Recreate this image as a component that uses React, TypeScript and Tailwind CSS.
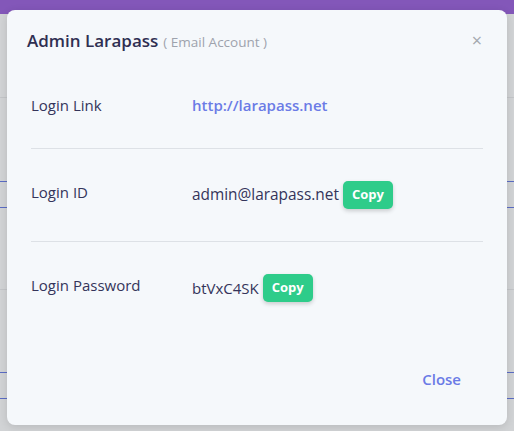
import React from "react";

function CopyBtn() {
  return (
    <button className="ml-[4px] h-[28px] px-[9px] rounded-[5px] bg-[#2ecc8a] text-white text-[13px] font-bold shadow-[0_2px_4px_rgba(0,0,0,0.18)]">
      Copy
    </button>
  );
}

export default function App() {
  return (
    <div
      className="relative w-[514px] h-[431px] overflow-hidden bg-[#d1d3d5]"
      style={{ fontFamily: '"Open Sans", "Noto Sans", sans-serif' }}
    >
      <div className="h-[14px] bg-[#8357b9]" />
      <div className="h-[83px]" />
      <div className="h-[84px] border-t border-[#c3c5c8]" />
      <div className="h-[26px] border-t border-[#5b6cc4]" />
      <div className="h-[82px] border-t border-[#5b6cc4]" />
      <div className="h-[83px] border-t border-[#c3c5c8]" />
      <div className="h-[26px] border-t border-[#5b6cc4]" />
      <div className="h-[40px] border-t border-[#5b6cc4]" />

      <div className="absolute left-[7px] top-[10px] w-[500px] h-[415px] rounded-[8px] bg-[#f5f8fb] shadow-[0_2px_8px_rgba(0,0,0,0.12)] flex flex-col">
        <div className="h-[60px] px-5 flex items-center justify-between">
          <div className="flex items-baseline gap-[5px] pt-[1px]">
            <span className="text-[17px] font-semibold text-[#2f2f52]">Admin Larapass</span>
            <span className="text-[13.5px] text-[#9ea3ad]">( Email Account )</span>
          </div>
          <span className="text-[18px] leading-none text-[#a4a8ae] mr-[5px]">×</span>
        </div>
        <div className="px-6 pt-6 text-[15px] text-[#34345a]">
          <div className="flex items-center h-[22px]">
            <div className="w-[161px]">Login Link</div>
            <a className="font-semibold text-[#6b7be6]">http://larapass.net</a>
          </div>
          <div className="mt-8 border-t border-[#dde1e6]" />
          <div className="flex items-center py-8">
            <div className="w-[161px] self-start">Login ID</div>
            <div className="flex items-center">
              <span className="text-[15.4px]">admin@larapass.net</span>
              <CopyBtn />
            </div>
          </div>
          <div className="border-t border-[#dde1e6]" />
          <div className="flex items-center py-8">
            <div className="w-[161px] self-start">Login Password</div>
            <div className="flex items-center">
              <span>btVxC4SK</span>
              <CopyBtn />
            </div>
          </div>
        </div>
        <div className="flex-1 flex items-center justify-end pr-[30px] pb-[1px]">
          <button className="px-4 py-2 text-[15px] font-semibold text-[#6b7be6]">Close</button>
        </div>
      </div>
    </div>
  );
}
